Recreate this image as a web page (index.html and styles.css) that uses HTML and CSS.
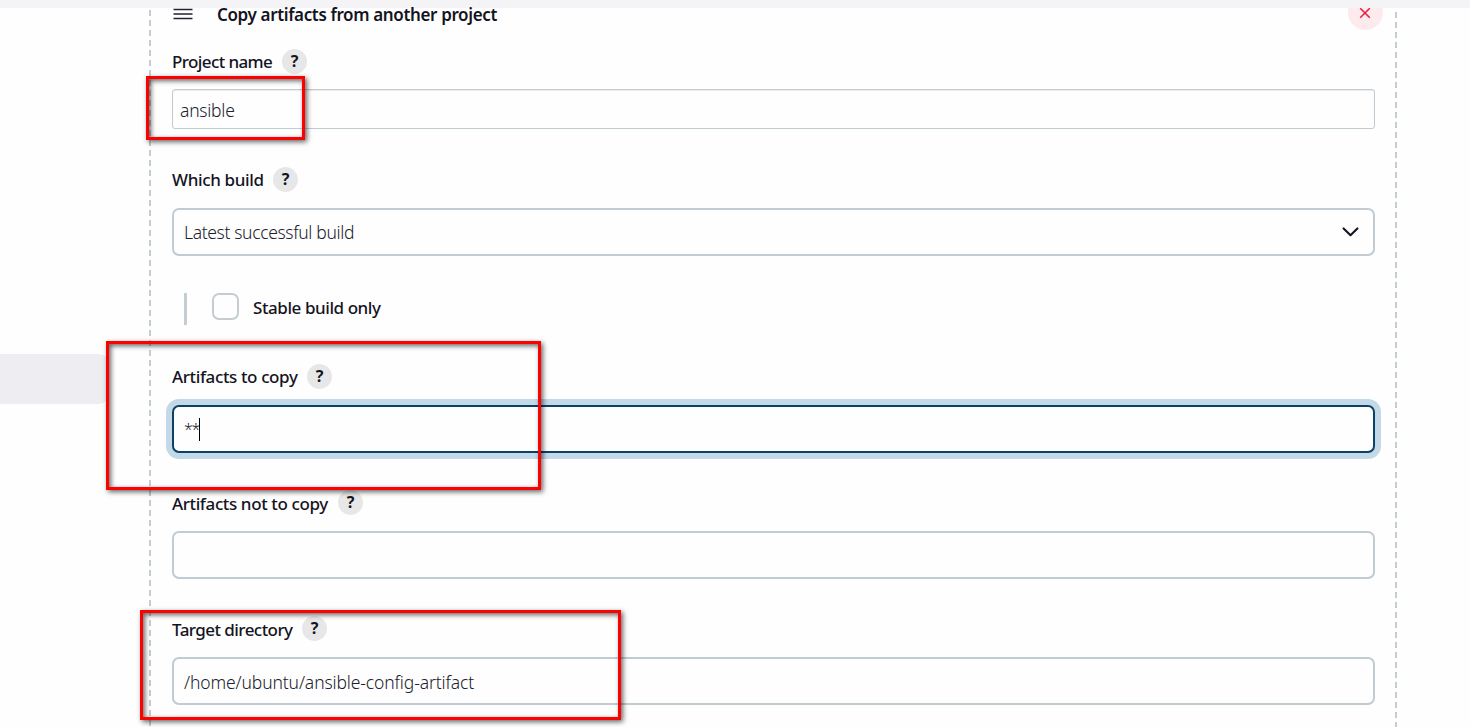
FILE: index.html
```
<!DOCTYPE html>
<html lang="en">
<head>
<meta charset="utf-8">
<title>Copy artifacts from another project</title>
<link rel="stylesheet" href="styles.css">
</head>
<body>
<div class="topbar"></div>
<div class="page">
  <aside class="sidebar"><div class="sidebar-item"></div></aside>
  <main class="step">
    <header class="step-header">
      <svg class="handle" width="20" height="12" viewBox="0 0 20 12"><path d="M0.5 1.5h19M0.5 6h19M0.5 10.5h19" stroke="#23222f" stroke-width="1.7"/></svg>
      <h1 class="title">Copy artifacts from another project</h1>
      <div class="delete"><svg width="12" height="12" viewBox="0 0 12 12"><path d="M1.2 1.2l9.6 9.6M10.8 1.2l-9.6 9.6" stroke="#e6203f" stroke-width="1.5" fill="none"/></svg></div>
    </header>
    <section class="field field-project">
      <div class="label"><span class="text name-project">Project name</span><span class="help">?</span></div>
      <div class="input small"><span class="value value-project">ansible</span></div>
    </section>
    <section class="field field-which">
      <div class="label"><span class="text name-which">Which build</span><span class="help">?</span></div>
      <div class="input"><span class="value value-which">Latest successful build</span>
        <svg class="chevron" width="17" height="10" viewBox="0 0 17 10"><path d="M1.6 1.4l6.9 6.8 6.9-6.8" fill="none" stroke="#14141f" stroke-width="2.1" stroke-linecap="round" stroke-linejoin="round"/></svg></div>
    </section>
    <div class="nested"><span class="checkbox"></span><span class="text name-stable">Stable build only</span></div>
    <section class="field field-copy">
      <div class="label"><span class="text name-copy">Artifacts to copy</span><span class="help">?</span></div>
      <div class="input focused"><span class="value value-copy">**</span><span class="caret"></span></div>
    </section>
    <section class="field field-exclude">
      <div class="label"><span class="text name-exclude">Artifacts not to copy</span><span class="help">?</span></div>
      <div class="input"></div>
    </section>
    <section class="field field-target">
      <div class="label"><span class="text name-target">Target directory</span><span class="help">?</span></div>
      <div class="input"><span class="value value-target">/home/ubuntu/ansible-config-artifact</span></div>
    </section>
  </main>
</div>
<div class="mark mark-project"></div>
<div class="mark mark-copy"></div>
<div class="mark mark-target"></div>
</body>
</html>
```
FILE: styles.css
```
* { box-sizing: border-box; }
body { margin: 0; height: 727px; overflow: hidden; position: relative; background: #fefefe; color: #14141f; font-family: "Noto Sans", "Open Sans", sans-serif; font-size: 17px; }
.topbar { height: 8px; background: #f4f4f7; }
.page { display: flex; height: 719px; }
.sidebar { flex: 0 0 149px; padding-top: 346px; }
.sidebar-item { width: 109px; height: 50px; background: #eeedf2; border-radius: 0 10px 10px 0; }
.step {
  width: 1248px; height: 719px; padding: 0 22px 0 23px;
  background:
    repeating-linear-gradient(#c3cdd2 0 6px, transparent 6px 10px) 0 2px / 2px 720px no-repeat,
    repeating-linear-gradient(#c3cdd2 0 6px, transparent 6px 10px) 1246px 4px / 2px 720px no-repeat;
}
.step-header { display: flex; height: 41px; align-items: flex-start; }
.handle { margin: 0 24px 0 1px; }
.title { margin: -4px auto 0 0; font-size: 17px; line-height: 22px; font-weight: 600; letter-spacing: -0.36px; white-space: nowrap; }
.delete { display: flex; width: 35px; height: 35px; margin: -13px -8px 0 0; padding-right: 2px; border-radius: 50%; background: #fdeaed; align-items: center; justify-content: center; clip-path: inset(13px 0 0 0); }
.label { display: flex; height: 25px; align-items: center; }
.text { flex: none; font-weight: 500; line-height: 25px; white-space: nowrap; }
.help { width: 25px; height: 25px; border-radius: 50%; background: #e7e7e8; text-align: center; font-size: 16px; line-height: 25px; font-weight: 700; }
.input { display: flex; height: 48px; margin-top: 16px; padding: 0 14px 0 10px; border: 2px solid #c1cbd2; border-radius: 7px; align-items: center; background: #fefefe; }
.input.small { height: 40px; margin-top: 15px; padding: 2px 8px 0 7px; border-width: 1px; border-radius: 3px; box-shadow: inset 0 1px 1px #ececef; }
.input.focused { border-color: #0b4067; box-shadow: 0 0 0 6px #c3d9e7; }
.value { font-size: 17.5px; font-weight: 300; white-space: nowrap; color: #20202b; }
.value-project { letter-spacing: -0.25px; }
.value-which { letter-spacing: -0.35px; }
.value-copy { font-size: 16px; letter-spacing: -1.4px; line-height: 20px; }
.value-target { letter-spacing: -0.12px; padding-top: 1px; }
.chevron { margin-left: auto; }
.caret { width: 1px; height: 23px; background: #000; }
.field-which { margin-top: 38px; }
.nested { display: flex; height: 32px; margin: 37px 0 39px 12px; padding-left: 25px; border-left: 3px solid #c3cdd2; }
.checkbox { width: 27px; height: 27px; margin-right: 14px; border: 2.5px solid #c3cdd2; border-radius: 7px; }
.nested .text { line-height: 29px; }
.field-exclude, .field-target { margin-top: 37px; }
.field-exclude .text, .field-target .text { padding-top: 2px; }
.name-project { width: 110px; letter-spacing: -0.6px; }
.name-which { width: 101px; letter-spacing: -0.35px; }
.name-stable { letter-spacing: -0.43px; }
.name-copy { width: 135px; letter-spacing: -0.38px; }
.name-exclude { width: 166px; letter-spacing: -0.39px; }
.name-target { width: 130px; letter-spacing: -0.55px; }
.mark { position: absolute; border: 3px solid #fe0000; box-shadow: 2px 2px 5px rgba(0,0,0,.6), inset 2px 2px 5px rgba(0,0,0,.6); }
.mark-project { left: 146px; top: 76px; width: 159px; height: 64px; }
.mark-copy { left: 106px; top: 341px; width: 435px; height: 149px; }
.mark-target { left: 140px; top: 610px; width: 481px; height: 110px; }
```
